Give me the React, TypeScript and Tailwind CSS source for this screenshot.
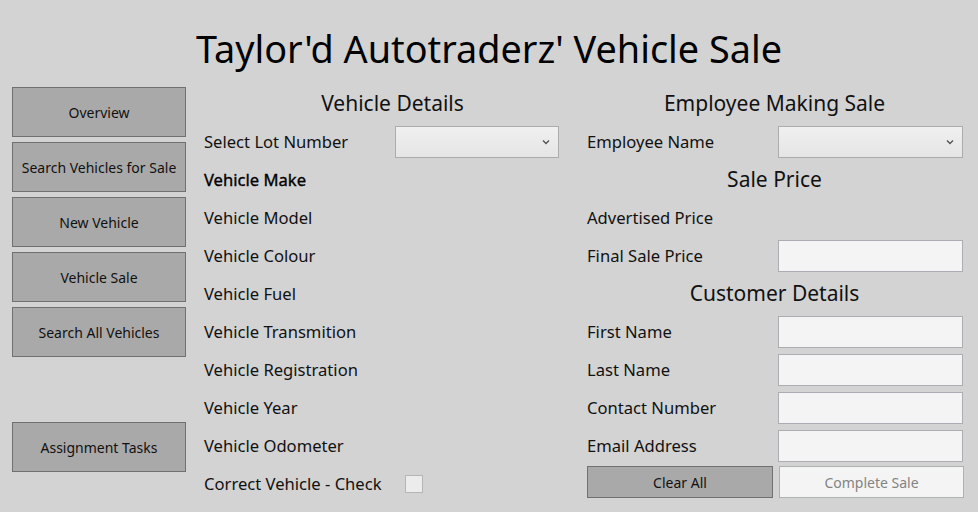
import React from 'react';

const font = { fontFamily: '"Noto Sans", "Open Sans", sans-serif' };

const navItems = ['Overview', 'Search Vehicles for Sale', 'New Vehicle', 'Vehicle Sale', 'Search All Vehicles'];

const vehicleRows = [
  'Vehicle Model',
  'Vehicle Colour',
  'Vehicle Fuel',
  'Vehicle Transmition',
  'Vehicle Registration',
  'Vehicle Year',
  'Vehicle Odometer',
];

function NavButton({ label }: { label: string }) {
  return (
    <button className="w-[174px] h-[50px] bg-[#a9a9a9] border border-[#707070] text-[14px] text-[#111]">
      {label}
    </button>
  );
}

function ComboBox() {
  return (
    <div className="flex items-center justify-end pr-2 w-full h-[32px] border border-[#acacac] bg-gradient-to-b from-[#f0f0f0] to-[#e5e5e5]">
      <svg width="8" height="6" viewBox="0 0 8 6" className="text-[#555]">
        <path d="M1 1.5 L4 4.5 L7 1.5" fill="none" stroke="currentColor" strokeWidth="1.4" />
      </svg>
    </div>
  );
}

function TextBox() {
  return <div className="w-[185px] h-[32px] border border-[#abadb3] bg-[#f4f4f4]" />;
}

function Header({ children, className = '' }: { children: React.ReactNode; className?: string }) {
  return (
    <div className={`h-[38px] flex items-center justify-center text-[21px] text-[#111] ${className}`}>{children}</div>
  );
}

function Row({ label, children, bold }: { label: string; children?: React.ReactNode; bold?: boolean }) {
  return (
    <div className="h-[38px] flex items-center">
      <div
        className={`w-[199px] pl-2 text-[16.6px] ${bold ? 'text-black [-webkit-text-stroke:0.35px_#000]' : 'text-[#111]'}`}
      >
        {label}
      </div>
      <div className="flex-1 flex items-center">{children}</div>
    </div>
  );
}

export default function App() {
  return (
    <div style={font} className="w-[978px] h-[512px] bg-[#d3d3d3] overflow-hidden">
      {/* Title */}
      <div className="h-[85px] flex items-center justify-center pt-[14px]">
        <h1 className="text-[37.8px] text-black">Taylor'd Autotraderz' Vehicle Sale</h1>
      </div>

      <div className="flex">
        {/* Side navigation */}
        <div className="ml-[12px] w-[174px] pt-[2px] flex flex-col gap-[5px]">
          {navItems.map((item) => (
            <NavButton key={item} label={item} />
          ))}
          <div className="mt-[60px]">
            <NavButton label="Assignment Tasks" />
          </div>
        </div>

        {/* Vehicle details */}
        <div className="ml-[10px] w-[375px]">
          <Header className="pl-[18px]">Vehicle Details</Header>
          <Row label="Select Lot Number">
            <div className="w-[164px]">
              <ComboBox />
            </div>
          </Row>
          <Row label="Vehicle Make" bold />
          {vehicleRows.map((r) => (
            <Row key={r} label={r} />
          ))}
          <Row label="Correct Vehicle - Check">
            <div className="ml-[10px] w-[18px] h-[18px] border border-[#b5b5b5] bg-[#ececec]" />
          </Row>
        </div>

        {/* Sale details */}
        <div className="ml-[8px] w-[391px]">
          <Header>Employee Making Sale</Header>
          <Row label="Employee Name">
            <div className="w-[185px]">
              <ComboBox />
            </div>
          </Row>
          <Header>Sale Price</Header>
          <Row label="Advertised Price" />
          <Row label="Final Sale Price">
            <TextBox />
          </Row>
          <Header>Customer Details</Header>
          <Row label="First Name">
            <TextBox />
          </Row>
          <Row label="Last Name">
            <TextBox />
          </Row>
          <Row label="Contact Number">
            <TextBox />
          </Row>
          <Row label="Email Address">
            <TextBox />
          </Row>
          <div className="h-[38px] flex items-center gap-[6px] pl-2 pb-[4px]">
            <button className="w-[186px] h-[32px] bg-[#a9a9a9] border border-[#707070] text-[14px] text-[#111]">
              Clear All
            </button>
            <button className="w-[185px] h-[32px] bg-[#f4f4f4] border border-[#adb2b5] text-[14px] text-[#838383]">
              Complete Sale
            </button>
          </div>
        </div>
      </div>
    </div>
  );
}
